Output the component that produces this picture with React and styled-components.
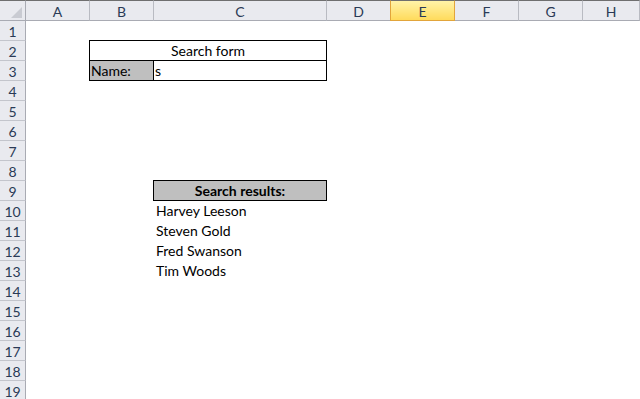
import React from "react";
import styled, { createGlobalStyle, css } from "styled-components";

const Global = createGlobalStyle`
  html, body { margin: 0; padding: 0; background: #fff; overflow: hidden; }
  body { font-family: Lato, "Liberation Sans", sans-serif; }
`;

const COLS = ["A", "B", "C", "D", "E", "F", "G", "H"];
const ROWS = 19;

const Sheet = styled.div`
  display: grid;
  grid-template-columns: 26px 64px 64px 173px 64px 64px 64px 64px 1fr;
  grid-template-rows: 21px repeat(${ROWS}, 20px);
  width: 640px;
  height: 399px;
  overflow: hidden;
  background: #fff;
`;

const headBase = css`
  box-sizing: border-box;
  background: #e9eaef;
  color: #2a3a56;
  font-size: 14px;
  display: flex;
  align-items: center;
  justify-content: center;
`;

const Corner = styled.div`
  ${headBase};
  position: relative;
  grid-column: 1;
  grid-row: 1;
  border-top: 1px solid #6f6f6f;
  border-right: 1px solid #a9abb3;
  border-bottom: 1px solid #a9abb3;
`;

const Triangle = styled.div`
  position: absolute;
  right: 3px;
  bottom: 2px;
  width: 0;
  height: 0;
  border-left: 11px solid transparent;
  border-bottom: 11px solid #c9cbd2;
`;

const ColHead = styled.div`
  ${headBase};
  grid-row: 1;
  grid-column: ${(p) => p.$col};
  border-top: 1px solid #6f6f6f;
  border-right: 1px solid #b9bbc2;
  border-bottom: 1px solid #a9abb3;
  padding-top: 1px;
  ${(p) =>
    p.$active &&
    css`
      background: linear-gradient(#fff3a8, #ffdb5c);
      border-right: 1px solid #e2a53b;
      border-bottom: 1px solid #e2a53b;
      margin-left: -1px;
      border-left: 1px solid #e2a53b;
    `}
`;

const RowHead = styled.div`
  ${headBase};
  grid-column: 1;
  grid-row: ${(p) => p.$row};
  border-right: 1px solid #a9abb3;
  border-bottom: 1px solid #c3c5cc;
  padding-top: 1px;
`;

const Cell = styled.div`
  box-sizing: border-box;
  grid-column: ${(p) => p.$col};
  grid-row: ${(p) => p.$row};
  font-size: 14px;
  line-height: 19px;
  height: 19px;
  padding: 0 2px;
  color: #000;
  white-space: nowrap;
  text-align: ${(p) => p.$align || "left"};
  font-weight: ${(p) => (p.$bold ? 700 : 400)};
  background: ${(p) => p.$fill || "transparent"};
  ${(p) =>
    p.$boxed &&
    css`
      height: 21px;
      margin: -1px 0 0 -1px;
      border: 1px solid #000;
      padding: 0 1px;
    `}
`;

const NAMES = ["Harvey Leeson", "Steven Gold", "Fred Swanson", "Tim Woods"];

export default function App() {
  return (
    <>
      <Global />
      <Sheet>
        <Corner>
          <Triangle />
        </Corner>
        {COLS.map((c, i) => (
          <ColHead key={c} $col={i + 2} $active={c === "E"}>
            {c}
          </ColHead>
        ))}
        {Array.from({ length: ROWS }, (_, i) => (
          <RowHead key={i} $row={i + 2}>
            {i + 1}
          </RowHead>
        ))}
        <Cell $boxed $align="center" $col="3 / 5" $row={3}>
          Search form
        </Cell>
        <Cell $boxed $fill="#bfbfbf" $col={3} $row={4}>
          Name:
        </Cell>
        <Cell $boxed $col={4} $row={4}>
          s
        </Cell>
        <Cell $boxed $bold $align="center" $fill="#bfbfbf" $col={4} $row={10}>
          Search results:
        </Cell>
        {NAMES.map((n, i) => (
          <Cell key={n} $col={4} $row={11 + i}>
            {n}
          </Cell>
        ))}
      </Sheet>
    </>
  );
}
